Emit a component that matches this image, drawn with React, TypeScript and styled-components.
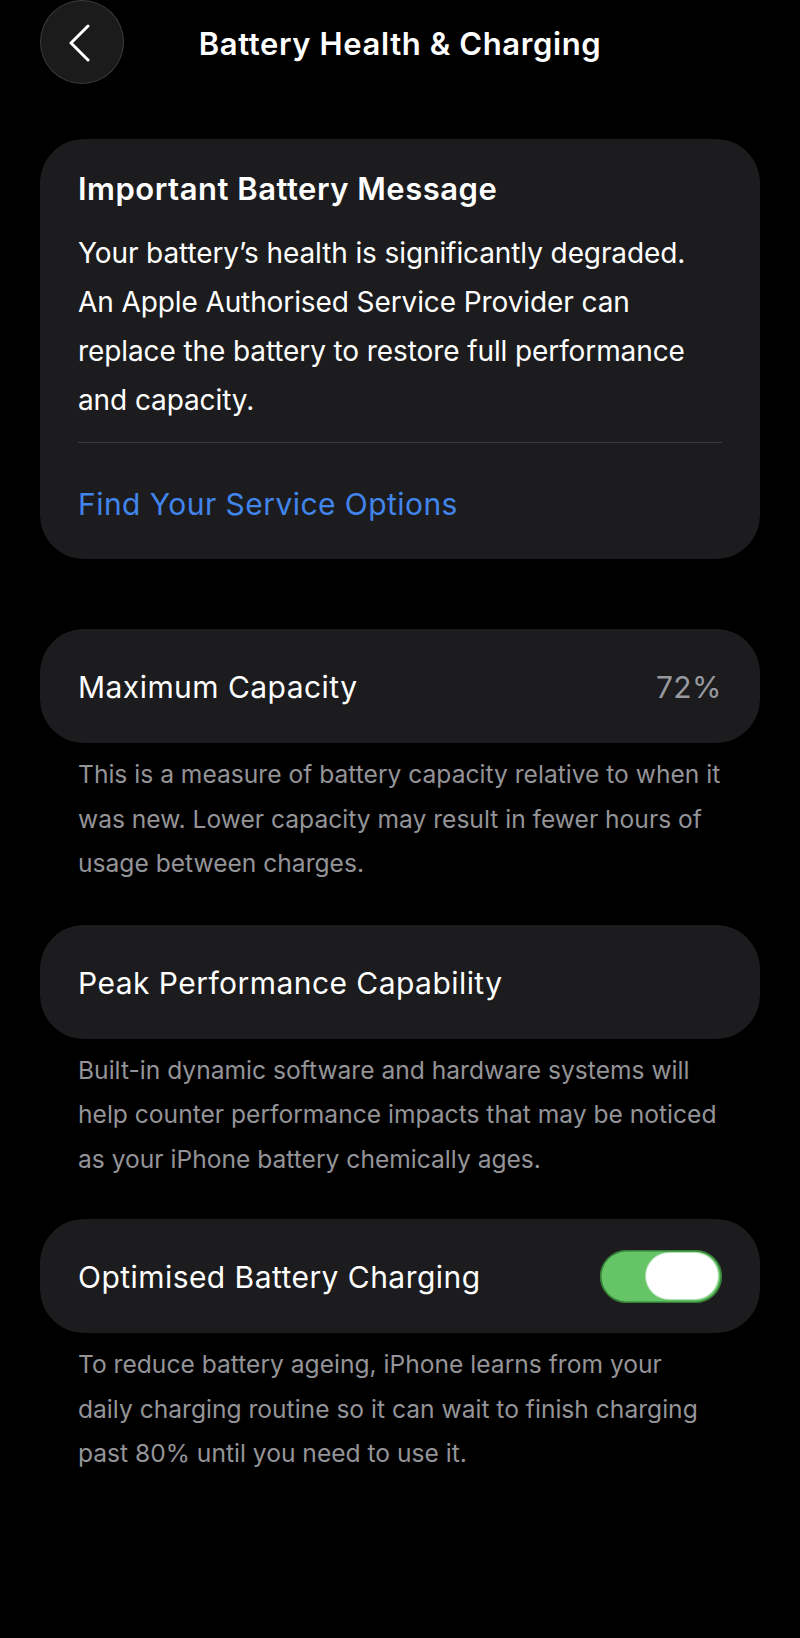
import React from "react";
import styled, { createGlobalStyle } from "styled-components";

const GlobalStyle = createGlobalStyle`
  html, body {
    margin: 0;
    padding: 0;
    background: #000;
  }
  body {
    font-family: Inter, "Noto Sans", "Liberation Sans", sans-serif;
    color: #fff;
    -webkit-font-smoothing: antialiased;
  }
`;

const Screen = styled.div`
  width: 800px;
  min-height: 1638px;
  background: #000;
  padding: 0 40px;
  box-sizing: border-box;
`;

const Header = styled.header`
  display: grid;
  grid-template-columns: 84px 1fr 84px;
  align-items: center;
  height: 86px;
`;

const BackButton = styled.button`
  width: 84px;
  height: 84px;
  border-radius: 50%;
  background: #1b1b1c;
  border: 1.5px solid rgba(255, 255, 255, 0.14);
  display: flex;
  align-items: center;
  justify-content: center;
  padding: 0;
  cursor: pointer;
  align-self: start;
`;

const Title = styled.h1`
  margin: 0;
  text-align: center;
  font-size: 31px;
  font-weight: 600;
  letter-spacing: 0.6px;
  color: #fff;
`;

const Card = styled.section<{ $mt?: number }>`
  background: #1c1c1e;
  border-radius: 44px;
  margin-top: ${({ $mt }) => $mt ?? 0}px;
  padding: 0 38px;
`;

const MessageCard = styled(Card)`
  padding-top: 30px;
  padding-bottom: 35px;
`;

const MessageTitle = styled.h2`
  margin: 0;
  font-size: 31px;
  line-height: 40px;
  font-weight: 600;
  letter-spacing: 0.5px;
`;

const MessageBody = styled.p`
  margin: 20px 0 0;
  font-size: 28px;
  line-height: 49px;
  font-weight: 400;
  letter-spacing: -0.1px;
  color: #fff;
`;

const Divider = styled.hr`
  border: 0;
  height: 1px;
  background: #3a3a3c;
  margin: 17px 0 0;
`;

const ServiceLink = styled.a`
  display: block;
  margin-top: 41px;
  font-size: 30px;
  line-height: 40px;
  color: #4185ec;
  letter-spacing: 0.45px;
  text-decoration: none;
`;

const Row = styled(Card)`
  height: 114px;
  display: flex;
  align-items: center;
  justify-content: space-between;
`;

const RowLabel = styled.span`
  font-size: 30px;
  letter-spacing: 0.45px;
  color: #fff;
  padding-top: 2px;
`;

const RowValue = styled.span`
  font-size: 30px;
  letter-spacing: 0.45px;
  color: #98989f;
  padding-top: 2px;
`;

const Footnote = styled.p`
  margin: 9px 0 0;
  padding: 0 38px;
  font-size: 24.6px;
  line-height: 44.5px;
  letter-spacing: 0;
  color: #949498;
`;

const Switch = styled.div<{ $on: boolean }>`
  width: 122px;
  height: 53px;
  border-radius: 27px;
  background: ${({ $on }) => ($on ? "#64c466" : "#39393d")};
  box-shadow: inset 0 0 0 1.5px rgba(20, 80, 20, 0.6);
  display: flex;
  align-items: center;
  justify-content: ${({ $on }) => ($on ? "flex-end" : "flex-start")};
  padding: 0 4px;
  box-sizing: border-box;
`;

const Thumb = styled.div`
  width: 72px;
  height: 46px;
  border-radius: 23px;
  background: #fff;
  box-shadow: 0 0 0 1px rgba(230, 240, 230, 0.6);
`;

export default function App() {
  return (
    <Screen>
      <GlobalStyle />
      <Header>
        <BackButton aria-label="Back">
          <svg width="40" height="40" viewBox="0 0 40 40" fill="none">
            <path
              d="M26 4 L9 21 L26 38"
              stroke="#fff"
              strokeWidth="3"
              strokeLinecap="round"
              strokeLinejoin="round"
            />
          </svg>
        </BackButton>
        <Title>Battery Health &amp; Charging</Title>
        <span />
      </Header>

      <MessageCard $mt={53}>
        <MessageTitle>Important Battery Message</MessageTitle>
        <MessageBody>
          Your battery’s health is significantly degraded. An Apple Authorised
          Service Provider can replace the battery to restore full performance
          and capacity.
        </MessageBody>
        <Divider />
        <ServiceLink href="#">Find Your Service Options</ServiceLink>
      </MessageCard>

      <Row $mt={70}>
        <RowLabel>Maximum Capacity</RowLabel>
        <RowValue>72%</RowValue>
      </Row>
      <Footnote>
        This is a measure of battery capacity relative to when it was new. Lower
        capacity may result in fewer hours of usage between charges.
      </Footnote>

      <Row $mt={39}>
        <RowLabel>Peak Performance Capability</RowLabel>
      </Row>
      <Footnote>
        Built-in dynamic software and hardware systems will help counter
        performance impacts that may be noticed as your iPhone battery
        chemically ages.
      </Footnote>

      <Row $mt={38}>
        <RowLabel>Optimised Battery Charging</RowLabel>
        <Switch $on>
          <Thumb />
        </Switch>
      </Row>
      <Footnote>
        To reduce battery ageing, iPhone learns from your daily charging routine
        so it can wait to finish charging past 80% until you need to use it.
      </Footnote>
    </Screen>
  );
}
